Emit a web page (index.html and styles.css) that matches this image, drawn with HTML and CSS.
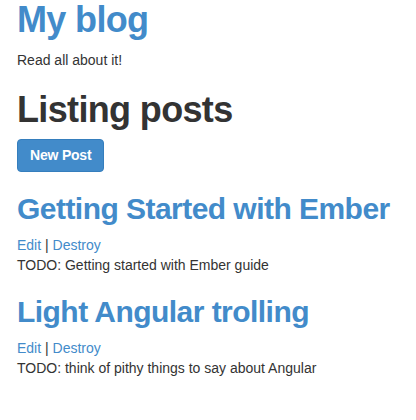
FILE: index.html
```html
<!DOCTYPE html>
<html>
<head>
<meta charset="utf-8">
<title>My blog</title>
<link rel="stylesheet" href="styles.css">
</head>
<body>
<div class="container">
  <h1 class="site-title"><a href="#">My blog</a></h1>
  <p class="tagline">Read all about it!</p>

  <h1 class="page-title">Listing posts</h1>
  <div class="actions">
    <a class="btn btn-primary" href="#">New Post</a>
  </div>

  <div class="post">
    <h2 class="post-title"><a href="#">Getting Started with Ember</a></h2>
    <div class="post-links"><a href="#">Edit</a> | <a href="#">Destroy</a></div>
    <div class="post-body">TODO: Getting started with Ember guide</div>
  </div>

  <div class="post">
    <h2 class="post-title"><a href="#">Light Angular trolling</a></h2>
    <div class="post-links"><a href="#">Edit</a> | <a href="#">Destroy</a></div>
    <div class="post-body">TODO: think of pithy things to say about Angular</div>
  </div>
</div>
</body>
</html>
```

FILE: styles.css
```css
html, body {
  margin: 0;
  padding: 0;
  background: #fff;
}

body {
  font-family: "Liberation Sans", Arial, Helvetica, sans-serif;
  font-size: 14px;
  line-height: 20px;
  color: #333;
}

a {
  color: #428bca;
  text-decoration: none;
}

.container {
  padding: 0 17px;
}

h1, h2 {
  font-family: "Liberation Sans", Arial, Helvetica, sans-serif;
  font-weight: 700;
  line-height: 1.1;
  letter-spacing: -0.018em;
  margin: 20px 0 10px;
}

h1 {
  font-size: 36px;
}

h2 {
  font-size: 30px;
}

.site-title {
  margin-top: 0;
}

.tagline {
  margin: 0 0 10px;
}

.page-title {
  color: #333;
}

.actions {
  display: flex;
  margin-bottom: 20px;
}

.btn {
  display: inline-block;
  padding: 6px 12px;
  font-size: 14px;
  line-height: 19px;
  font-weight: 700;
  letter-spacing: -0.2px;
  border: 1px solid transparent;
  border-radius: 4px;
}

.btn-primary {
  color: #fff;
  background-color: #428bca;
  border-color: #357ebd;
}

.post-title {
  margin-top: 0;
}

.post {
  margin-bottom: 20px;
}
```
